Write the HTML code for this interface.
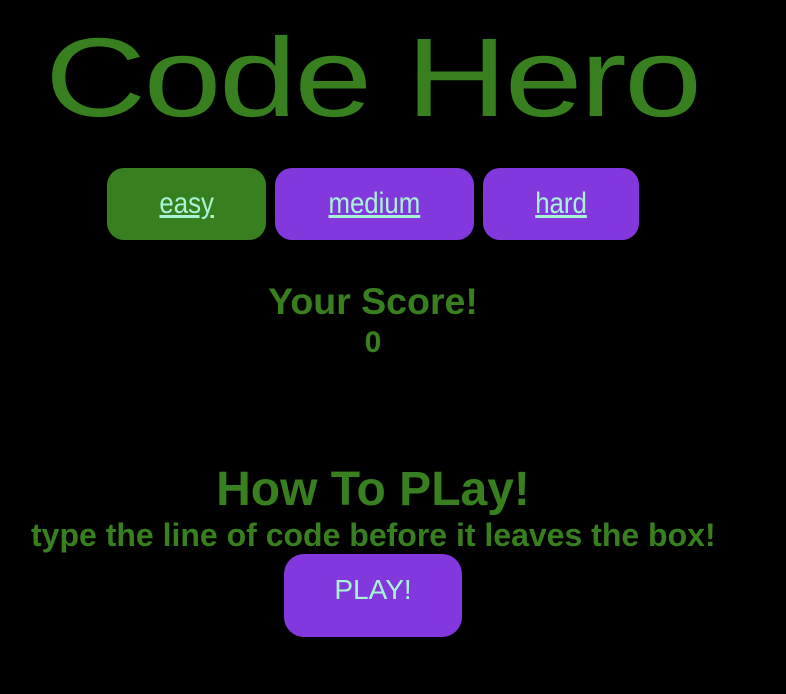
<!DOCTYPE html>
<html><head><style>
html,body{margin:0;padding:0;background:#000;width:786px;height:694px;overflow:hidden;font-family:"Liberation Sans",sans-serif;}
.a{position:absolute;white-space:nowrap;}
.t{left:45px;top:22px;font-size:112px;line-height:1;color:#38801f;transform:scaleX(1.25);transform-origin:left top;letter-spacing:-2px;}
.b{position:absolute;border-radius:17px;display:flex;align-items:center;justify-content:center;}
.b a{color:#a8f5d6;text-decoration:underline;font-size:30px;display:inline-block;transform:scaleX(0.86);}
.g{color:#38801f;font-weight:bold;text-align:center;}
</style></head><body>
<div class="a t">Code Hero</div>
<div class="b" style="left:107px;top:168px;width:159px;height:72px;background:#38801f"><a>easy</a></div>
<div class="b" style="left:275px;top:168px;width:199px;height:72px;background:#8338dd"><a>medium</a></div>
<div class="b" style="left:483px;top:168px;width:156px;height:72px;background:#8338dd"><a>hard</a></div>
<div class="a g" style="left:0;width:746px;top:280px;font-size:37.5px;">Your Score!</div>
<div class="a g" style="left:0;width:746px;top:326px;font-size:30px;">0</div>
<div class="a g" style="left:0;width:746px;top:462px;font-size:48px;">How To PLay!</div>
<div class="a g" style="left:31px;top:517px;font-size:32px;">type the line of code before it leaves the box!</div>
<div class="b" style="left:284px;top:554px;width:178px;height:83px;border-radius:20px;background:#8338dd;color:#a8f5d6;font-size:28px;align-items:flex-start;padding-top:20px;box-sizing:border-box;">PLAY!</div>
</body></html>
